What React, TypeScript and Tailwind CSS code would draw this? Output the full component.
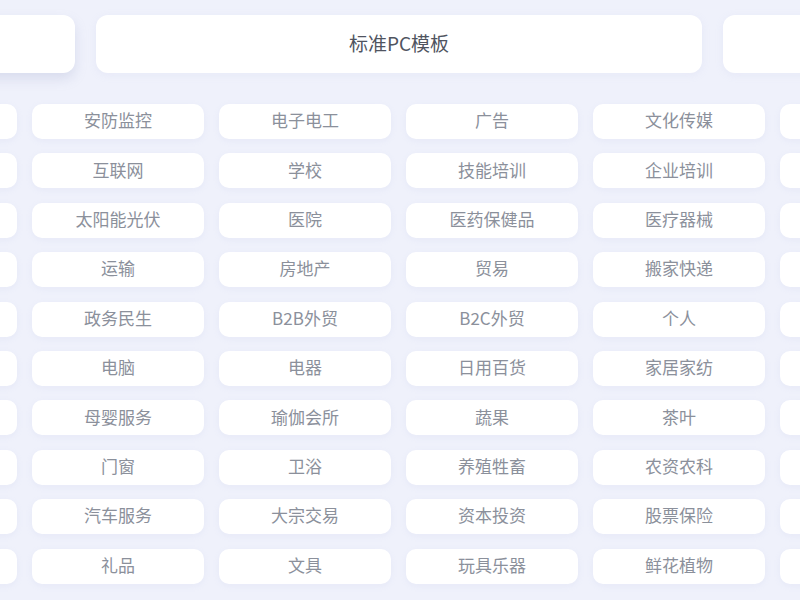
const tabs = ["", "标准PC模板", ""];

// first and last columns sit mostly off-screen, their labels are never seen
const categories = [
  ["", "安防监控", "电子电工", "广告", "文化传媒", ""],
  ["", "互联网", "学校", "技能培训", "企业培训", ""],
  ["", "太阳能光伏", "医院", "医药保健品", "医疗器械", ""],
  ["", "运输", "房地产", "贸易", "搬家快递", ""],
  ["", "政务民生", "B2B外贸", "B2C外贸", "个人", ""],
  ["", "电脑", "电器", "日用百货", "家居家纺", ""],
  ["", "母婴服务", "瑜伽会所", "蔬果", "茶叶", ""],
  ["", "门窗", "卫浴", "养殖牲畜", "农资农科", ""],
  ["", "汽车服务", "大宗交易", "资本投资", "股票保险", ""],
  ["", "礼品", "文具", "玩具乐器", "鲜花植物", ""],
];

export default function App() {
  return (
    <div
      className="w-[800px] h-[600px] overflow-hidden bg-[#eff1fb]"
      style={{ fontFamily: '"Noto Sans CJK SC", "Noto Sans", sans-serif' }}
    >
      {/* Tabs */}
      <div className="flex gap-[21px] ml-[-531px] pt-[15px]">
        {tabs.map((t, i) => (
          <div
            key={i}
            className={`w-[606px] h-[58px] shrink-0 rounded-[12px] bg-white flex items-center justify-center pb-[2px] text-[19px] text-[#50545f] ${
              i === 0 ? "shadow-[0_6px_12px_rgba(150,160,200,0.25)]" : "shadow-[0_2px_8px_rgba(170,180,220,0.12)]"
            }`}
          >
            {t}
          </div>
        ))}
      </div>

      {/* Category grid */}
      <div className="grid grid-cols-[repeat(6,172px)] gap-x-[15px] gap-y-[14.4px] ml-[-155px] mt-[31px]">
        {categories.flat().map((c, i) => (
          <div
            key={i}
            className="h-[35px] rounded-[10px] bg-white flex items-center justify-center pb-[3px] text-[17px] text-[#8b909b] shadow-[0_2px_6px_rgba(170,180,220,0.12)]"
          >
            {c}
          </div>
        ))}
      </div>
    </div>
  );
}
